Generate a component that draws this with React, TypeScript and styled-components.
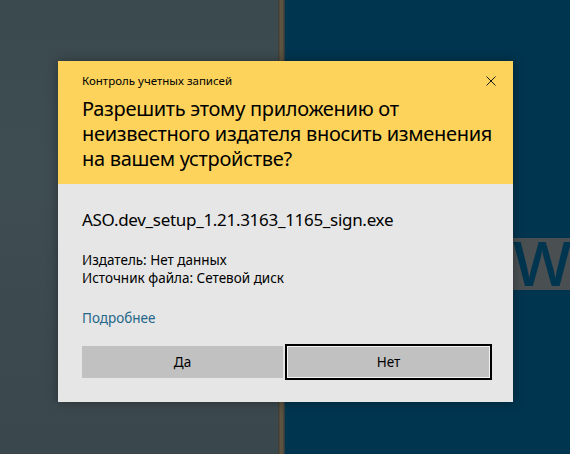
import styled, { createGlobalStyle } from 'styled-components'

const GlobalStyle = createGlobalStyle`
  html, body {
    margin: 0;
    padding: 0;
    background: #003550;
  }
  body {
    font-family: 'Noto Sans', 'Open Sans', sans-serif;
  }
`

const Desktop = styled.div`
  position: relative;
  width: 570px;
  height: 454px;
  overflow: hidden;
  display: grid;
  grid-template-columns: 278px 7px 1fr;
`

const LeftPane = styled.div`
  background: linear-gradient(180deg, #3b4a4f 0%, #3e4d52 40%, #3a474c 100%);
`

const Divider = styled.div`
  background: linear-gradient(90deg, #3a3a34 0%, #5c5340 35%, #5a5140 65%, #2c3a3e 100%);
`

const RightPane = styled.div`
  background: #00354f;
  display: flex;
  flex-direction: column;
  align-items: flex-end;
  padding-top: 238px;
`

// blurred window behind the dialog, only a letter of it shows
const GhostTile = styled.div`
  width: 90px;
  height: 52px;
  background: #4a4f52;
  overflow: hidden;
  display: flex;
  align-items: center;
  justify-content: flex-start;
  padding-left: 33px;
  box-sizing: border-box;
  font-family: 'Open Sans', sans-serif;
  font-weight: 600;
  font-size: 62px;
  line-height: 1;
  color: #00354f;
  span {
    margin-top: -4px;
  }
`

const Dialog = styled.div`
  position: absolute;
  left: 58px;
  top: 61px;
  width: 455px;
  box-shadow: 0 0 10px rgba(0, 0, 0, 0.35);
  color: #000;
`

const Header = styled.div`
  background: #fdd35b;
  padding: 12px 17px 13.5px 24px;
`

const TitleRow = styled.div`
  display: flex;
  align-items: center;
  justify-content: space-between;
  height: 16px;
`

const Caption = styled.div`
  font-size: 11.5px;
  line-height: 16px;
`

const CloseButton = styled.div`
  width: 10px;
  height: 10px;
  display: flex;
  svg {
    display: block;
  }
`

const Question = styled.div`
  margin-top: 6.5px;
  font-size: 20px;
  line-height: 25px;
  letter-spacing: -0.3px;
`

const Body = styled.div`
  background: #e6e6e6;
  padding: 24px 21px 22px 24px;
`

const FileName = styled.div`
  font-size: 17px;
  line-height: 24px;
  letter-spacing: -0.3px;
`

const Details = styled.div`
  margin-top: 19px;
  font-size: 13.5px;
  line-height: 18px;
`

const MoreLink = styled.div`
  margin-top: 22px;
  font-size: 13.5px;
  line-height: 18px;
  color: #256689;
`

const Buttons = styled.div`
  margin-top: 17px;
  display: flex;
  align-items: center;
  gap: 2px;
`

const Button = styled.div<{ $focused?: boolean }>`
  box-sizing: border-box;
  width: ${(p) => (p.$focused ? '207px' : '201px')};
  height: ${(p) => (p.$focused ? '36px' : '32px')};
  background: #c1c1c1;
  border: ${(p) => (p.$focused ? '2px solid #000' : 'none')};
  box-shadow: ${(p) => (p.$focused ? 'inset 0 0 0 1px #f2f2f2' : 'none')};
  display: flex;
  align-items: center;
  justify-content: center;
  font-size: 13.5px;
`

export default function App() {
  return (
    <>
      <GlobalStyle />
      <Desktop>
        <LeftPane />
        <Divider />
        <RightPane>
          <GhostTile>
            <span>W</span>
          </GhostTile>
        </RightPane>

        <Dialog>
          <Header>
            <TitleRow>
              <Caption>Контроль учетных записей</Caption>
              <CloseButton>
                <svg width='10' height='10' viewBox='0 0 10 10'>
                  <path d='M0.5 0.5L9.5 9.5M9.5 0.5L0.5 9.5' stroke='#1a1a1a' strokeWidth='1' />
                </svg>
              </CloseButton>
            </TitleRow>
            <Question>
              Разрешить этому приложению от неизвестного издателя вносить изменения на вашем устройстве?
            </Question>
          </Header>
          <Body>
            <FileName>ASO.dev_setup_1.21.3163_1165_sign.exe</FileName>
            <Details>
              <div>Издатель: Нет данных</div>
              <div>Источник файла: Сетевой диск</div>
            </Details>
            <MoreLink>Подробнее</MoreLink>
            <Buttons>
              <Button>Да</Button>
              <Button $focused>Нет</Button>
            </Buttons>
          </Body>
        </Dialog>
      </Desktop>
    </>
  )
}
